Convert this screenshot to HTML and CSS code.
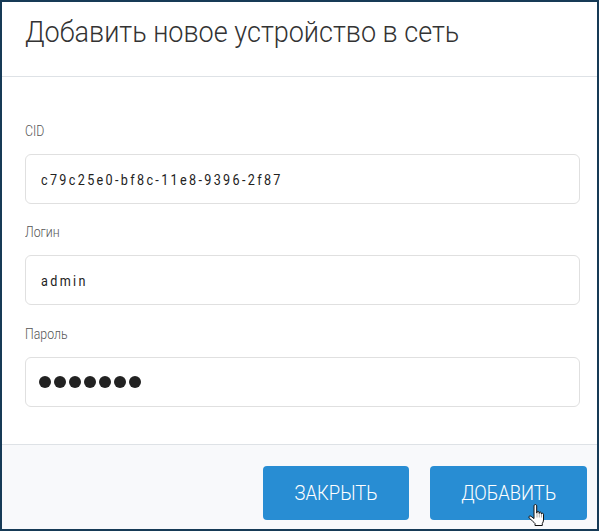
FILE: index.html
```html
<!DOCTYPE html>
<html lang="ru">
<head>
<meta charset="utf-8">
<title>Добавить новое устройство в сеть</title>
<link rel="stylesheet" href="styles.css">
</head>
<body>
<div class="modal">
  <header class="head"><h1 class="title">Добавить новое устройство в сеть</h1></header>
  <main class="body">
    <div class="field"><label class="label"><span class="label-text">CID</span></label><div class="input"><span class="value">c79c25e0-bf8c-11e8-9396-2f87</span></div></div>
    <div class="field"><label class="label"><span class="label-text">Логин</span></label><div class="input"><span class="value">admin</span></div></div>
    <div class="field field-last"><label class="label"><span class="label-text">Пароль</span></label><div class="input dots"><i></i><i></i><i></i><i></i><i></i><i></i><i></i></div></div>
  </main>
  <footer class="foot">
    <button class="btn"><span class="btn-text">ЗАКРЫТЬ</span></button>
    <button class="btn btn-wide"><span class="btn-text">ДОБАВИТЬ</span></button>
    <svg class="cursor" width="17" height="22" viewBox="0 0 17 22">
      <path d="M6 1.8c0-1.7 2.7-1.7 2.7 0V9h.3V8.2c0-1.2 2-1.2 2 0v1.2h.3V9c0-1.2 2-1.2 2 0v1h.2c0-1.1 2-1 2 .2V16c0 1.5-.6 2.5-1.2 3.5v2H7v-2C5.8 18 3.5 16.2 1.2 14c-1.1-1.3.5-2.8 1.8-1.7L6 14.6z" fill="#fff" stroke="#111" stroke-width="1"/>
      <path d="M9 9v4.5M11.3 9.4v4.1M13.5 10v3.5" fill="none" stroke="#888" stroke-width=".7"/>
    </svg>
  </footer>
</div>
</body>
</html>
```
FILE: styles.css
```css
* { box-sizing: border-box; }
html, body { margin: 0; height: 100%; }
body { background: #163a56; padding: 2px; font-family: Roboto, sans-serif; }
.modal { position: relative; height: 527px; background: #fff; display: flex; flex-direction: column; }
.head { height: 75px; border-bottom: 1px solid #dee2e6; padding: 0 23px; flex: none; }
.title { margin: 0; padding-top: 13px; font-size: 30px; line-height: 34px; font-weight: 300; color: #333; white-space: nowrap; transform: scaleX(.9); transform-origin: left center; }
.body { flex: 1; padding: 47px 17px 0 23px; display: flex; flex-direction: column; gap: 21px; }
.field-last { margin-top: 1px; }
.label { display: block; height: 15px; line-height: 15px; font-size: 14px; font-weight: 300; color: #555; margin-bottom: 15px; }
.label-text { display: inline-block; transform: scaleX(.88); transform-origin: left center; }
.input { height: 50px; border: 1px solid #e0e0e0; border-radius: 6px; padding: 0 15px; line-height: 50px; font-size: 14px; color: #222; }
.value { display: inline-block; letter-spacing: 2.6px; white-space: nowrap; transform: scaleX(.9); transform-origin: left center; }
.dots { display: flex; align-items: center; gap: 3px; padding-left: 12.7px; }
.dots i { width: 12px; height: 12px; border-radius: 50%; background: #222; }
.foot { height: 85px; flex: none; background: #f8f9fb; border-top: 1px solid #dee2e6; display: flex; justify-content: flex-end; align-items: flex-start; gap: 21px; padding: 21px 10px 0 0; }
.btn { width: 146px; height: 54px; border: 0; border-radius: 4px; background: #288dd3; color: #fff; font-family: inherit; font-size: 20px; font-weight: 300; padding: 0; }
.btn-text { display: inline-block; transform: scaleX(.92); }
.btn-wide { width: 157px; }
.cursor { position: absolute; right: 52px; bottom: 3px; }
```
